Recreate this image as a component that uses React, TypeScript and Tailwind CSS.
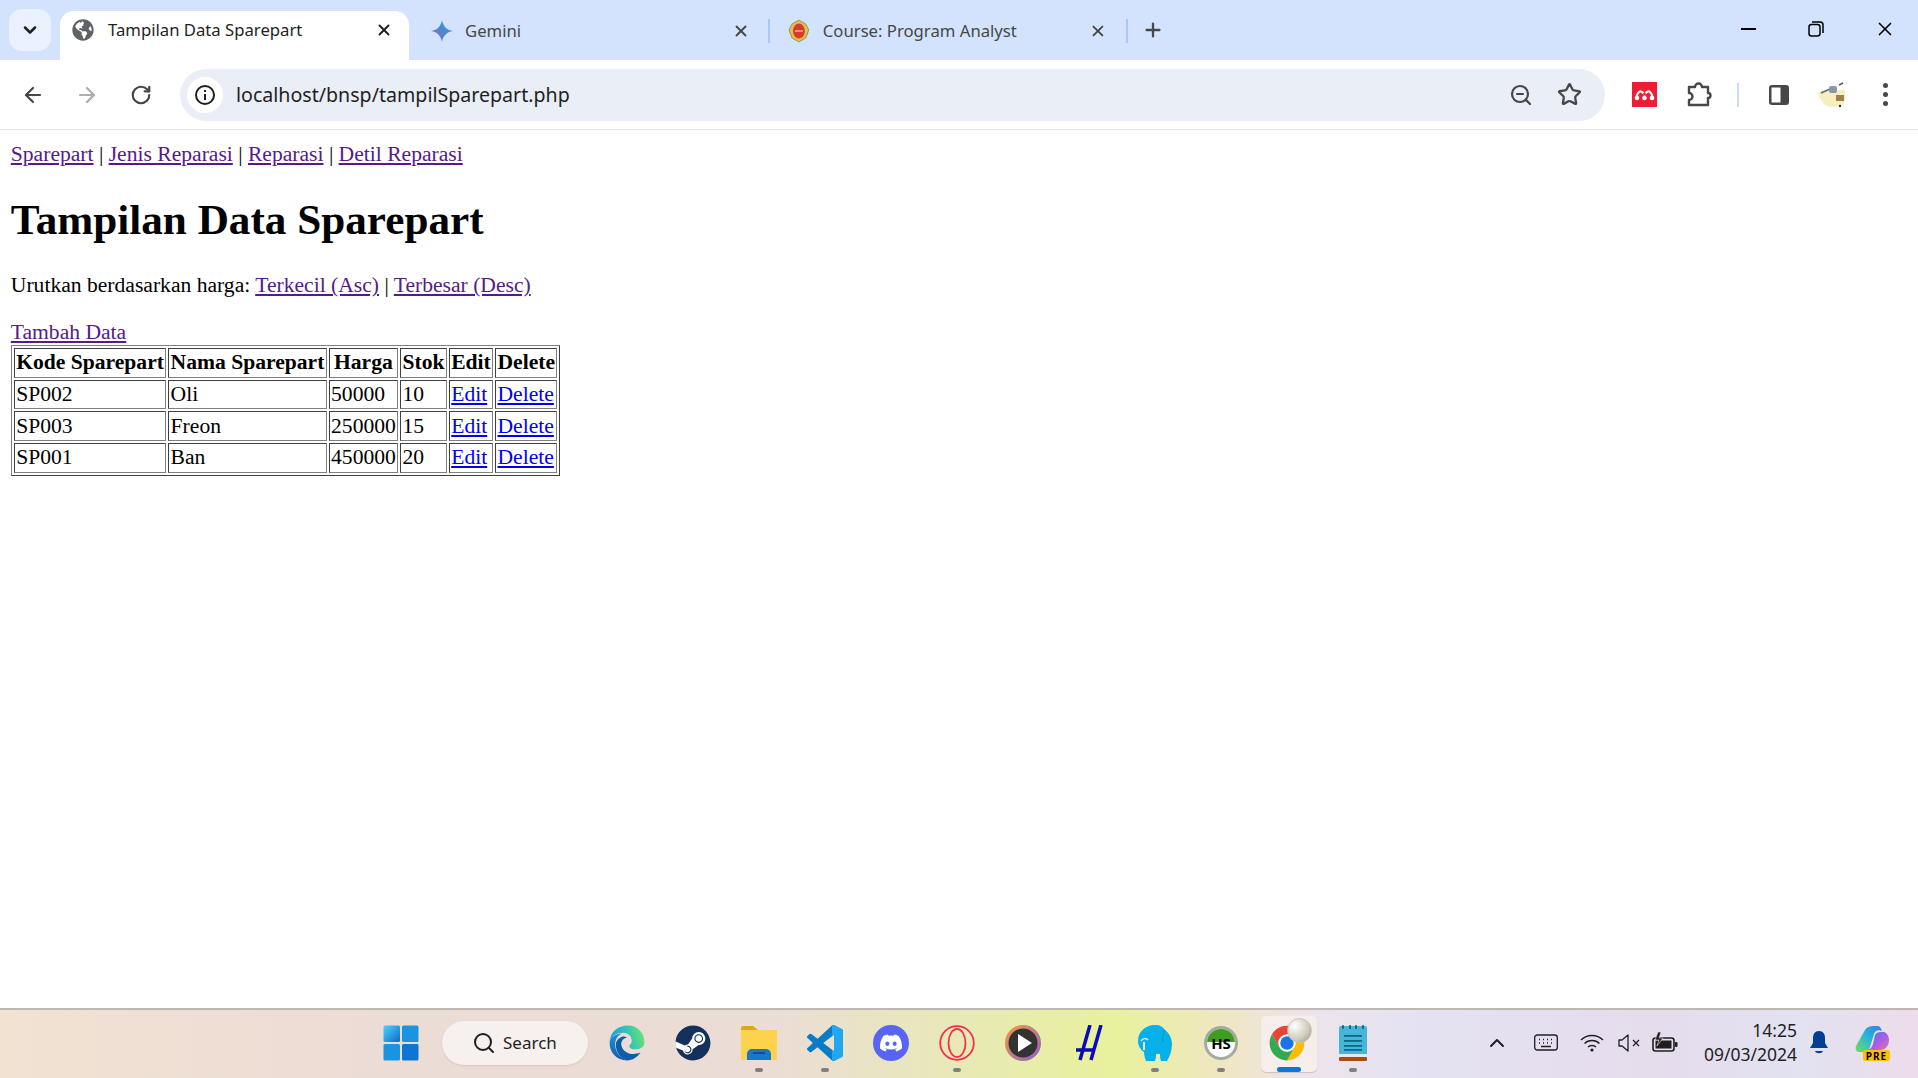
import { ChevronDown, ChevronUp, X, Plus, ArrowLeft, ArrowRight, RotateCw, ZoomOut, Star, Search } from "lucide-react";
import { FaDiscord, FaGlobeAmericas, FaSteam } from "react-icons/fa";
import type { ReactNode } from "react";

const ui = "[font-family:'Noto_Sans',sans-serif]";

function GeminiStar() {
  return (
    <svg width="24" height="24" viewBox="0 0 24 24">
      <defs>
        <linearGradient id="gem" x1="0" y1="1" x2="1" y2="0">
          <stop offset="0" stopColor="#9168c0" />
          <stop offset="0.5" stopColor="#5684d1" />
          <stop offset="1" stopColor="#1ba1e3" />
        </linearGradient>
      </defs>
      <path d="M12 1c1 6 4.500 10 11 11-6.500 1-10 5-11 11-1-6-4.500-10-11-11 6.500-1 10-5 11-11z" fill="url(#gem)" />
    </svg>
  );
}

function CourseIcon() {
  return (
    <svg width="22" height="24" viewBox="0 0 22 24">
      <path d="M11 1l7 4 3 6-3 8-7 4-7-4-3-8 3-6z" fill="#e3c04a" stroke="#8f9a5a" />
      <ellipse cx="11" cy="12" rx="6" ry="7.500" fill="#d93a30" />
      <path d="M7 12h8" stroke="#f5b0a0" strokeWidth="1.500" />
    </svg>
  );
}

function Mendeley() {
  return (
    <svg width="25" height="25" viewBox="0 0 25 25">
      <rect width="25" height="25" fill="#ee1c34" />
      <path d="M4.500 15c2-7 5-7 8-2.500 3-4.500 6-4.500 8 2.500" fill="none" stroke="#fff" strokeWidth="2.200" />
      <circle cx="5" cy="16" r="2.300" fill="#fff" />
      <circle cx="12.500" cy="16" r="2.300" fill="#fff" />
      <circle cx="20" cy="16" r="2.300" fill="#fff" />
      <circle cx="12.500" cy="12" r="1.400" fill="#ee1c34" />
    </svg>
  );
}

function Avatar() {
  return (
    <svg width="32" height="28" viewBox="0 0 32 28">
      <path d="M2 12c6-4 8-2 12-1 6 0 10-3 14-2 3 4 2 12-2 15-6 3-14 3-18-1C5 20 3 16 2 12z" fill="#f6eec0" />
      <path d="M5 12l9-4" stroke="#6c6c60" strokeWidth="1.500" />
      <rect x="13" y="5" width="8" height="7" rx="2" fill="#8b97a8" />
      <path d="M23 4l4-2" stroke="#555" strokeWidth="1.500" />
      <rect x="20" y="14" width="8" height="6" fill="#9a8350" />
      <circle cx="24" cy="25" r="1.200" fill="#333" />
    </svg>
  );
}

function WindowsLogo() {
  return (
    <svg width="36" height="36" viewBox="0 0 36 36">
      <defs>
        <linearGradient id="win" x1="0" y1="0" x2="1" y2="1">
          <stop offset="0" stopColor="#4fd0fb" />
          <stop offset="1" stopColor="#0a6fc9" />
        </linearGradient>
      </defs>
      <rect x="0.500" y="0.500" width="16.500" height="16.500" rx="1.500" fill="url(#win)" />
      <rect x="19" y="0.500" width="16.500" height="16.500" rx="1.500" fill="#1a93e0" />
      <rect x="0.500" y="19" width="16.500" height="16.500" rx="1.500" fill="#1a93e0" />
      <rect x="19" y="19" width="16.500" height="16.500" rx="1.500" fill="#0c76d2" />
    </svg>
  );
}

function Edge() {
  return (
    <svg width="38" height="38" viewBox="0 0 48 48">
      <defs>
        <linearGradient id="edgeTop" x1="0" y1="0.600" x2="1" y2="0.400">
          <stop offset="0" stopColor="#1a9fd8" />
          <stop offset="0.550" stopColor="#2fc6b8" />
          <stop offset="1" stopColor="#6fe36a" />
        </linearGradient>
        <linearGradient id="edgeLow" x1="0" y1="0" x2="0" y2="1">
          <stop offset="0" stopColor="#1f8fd8" />
          <stop offset="1" stopColor="#0f5fae" />
        </linearGradient>
      </defs>
      <path d="M2 24C2 10 13 2 25 2c13 0 21 10 21 21 0 6-5 9-11 9-4 0-8-1-8-4 0-2 3-3 3-7 0-6-5-10-11-10C10 11 2 17 2 24z" fill="url(#edgeTop)" />
      <path d="M2 24c0-7 8-12 16-12-6 2-9 8-9 14 0 8 6 18 15 20C11 46 2 36 2 24z" fill="url(#edgeLow)" />
      <path d="M10 24c3-7 9-10 14-7-5 1-8 5-7 10 1 8 12 14 24 9-4 6-10 10-17 10-9-2-15-12-14-22z" fill="#0e5da8" />
    </svg>
  );
}

function Folder() {
  return (
    <svg width="36" height="34" viewBox="0 0 36 34">
      <path d="M0 2a2 2 0 0 1 2-2h10l5 4h19v6H0z" fill="#e2a70b" />
      <rect y="4" width="36" height="30" rx="1" fill="#fcd34d" />
      <path d="M6 34v-6a5 5 0 0 1 5-5h14a5 5 0 0 1 5 5v6z" fill="#1678c8" />
      <rect x="12" y="26" width="12" height="2" fill="#0a4f90" />
    </svg>
  );
}

function VsCode() {
  const d =
    "M23.15 2.587L18.21.21a1.494 1.494 0 0 0-1.705.29l-9.46 8.63-4.12-3.128a.999.999 0 0 0-1.276.057L.327 7.261A1 1 0 0 0 .326 8.74L3.899 12 .326 15.26a1 1 0 0 0 .001 1.479L1.65 17.94a.999.999 0 0 0 1.276.057l4.12-3.128 9.46 8.63a1.492 1.492 0 0 0 1.704.29l4.942-2.377A1.5 1.5 0 0 0 24 20.06V3.939a1.5 1.5 0 0 0-.85-1.352zm-5.146 14.861L10.826 12l7.178-5.448v10.896z";
  return (
    <svg width="36" height="36" viewBox="0 0 24 24">
      <defs>
        <clipPath id="vsr">
          <rect x="16.600" y="0" width="8" height="24" />
        </clipPath>
      </defs>
      <path d={d} fill="#0a7cc7" />
      <path d={d} fill="#20a7f0" clipPath="url(#vsr)" />
    </svg>
  );
}

function Opera() {
  return (
    <svg width="36" height="36" viewBox="0 0 36 36" fill="none" stroke="#f5304f" strokeWidth="1.800">
      <circle cx="18" cy="18" r="16.800" />
      <ellipse cx="18" cy="18" rx="8.500" ry="14" />
    </svg>
  );
}

function PlayIcon() {
  return (
    <svg width="36" height="36" viewBox="0 0 36 36">
      <defs>
        <linearGradient id="pl" x1="0" y1="0" x2="1" y2="1">
          <stop offset="0" stopColor="#f59a3c" />
          <stop offset="1" stopColor="#8f5fc8" />
        </linearGradient>
      </defs>
      <circle cx="18" cy="18" r="18" fill="url(#pl)" />
      <circle cx="18" cy="18" r="14.500" fill="#333" />
      <path d="M13 9l14 9-14 9z" fill="#fff" />
    </svg>
  );
}

function HashIcon() {
  return (
    <svg width="28" height="36" viewBox="0 0 28 36" fill="none" stroke="#0a0ab8" strokeWidth="3.500">
      <path d="M15 0L5 35" />
      <path d="M26 0L16 35" />
      <path d="M1 25h18" />
    </svg>
  );
}

function Elephant() {
  return (
    <svg width="34" height="36" viewBox="0 0 34 36">
      <path d="M17 0c5 0 8 2 10 5 4 3 7 8 7 14 0 6-2 12-5 17h-6c-1-3-1-5-1-7h-4c0 2 0 4-1 7H8c-1-3-2-6-2-9-3-2-6-6-6-11C0 7 7 0 17 0z" fill="#08b0ea" />
      <path d="M27 5c-2 3-3 7-2 12" stroke="#0790c4" strokeWidth="1" fill="none" />
      <path d="M3 16c2-3 5-3 7-1" stroke="#d8f0f8" strokeWidth="1.500" fill="none" />
      <path d="M6 17v8" stroke="#e8e8e8" strokeWidth="2" />
    </svg>
  );
}

function Notepad() {
  return (
    <svg width="28" height="36" viewBox="0 0 28 36">
      <rect x="0" y="1" width="28" height="30" rx="2" fill="#45b5d8" />
      <rect x="0" y="29" width="28" height="3" fill="#e6e6e6" />
      <rect x="0" y="32" width="28" height="4" rx="1" fill="#b04a0c" />
      {[4, 11, 17, 24].map((x) => (
        <rect key={x} x={x - 1} y="0" width="2" height="4" rx="1" fill="#0b6a88" />
      ))}
      {[10, 15, 20, 24].map((y) => (
        <rect key={y} x={5} y={y} width={18} height="1.800" fill="#0b6a88" />
      ))}
    </svg>
  );
}

function ChromeIcon() {
  return (
    <svg width="38" height="38" viewBox="0 0 48 48">
      <path d="M5 13a22 22 0 0 1 38 0H24L14.500 29.500z" fill="#ea4335" />
      <path d="M43 13a22 22 0 0 1-19 33l9.500-16.500L24 13z" fill="#fbbc04" />
      <path d="M24 46A22 22 0 0 1 5 13l9.500 16.500h19z" fill="#34a853" />
      <circle cx="24" cy="24" r="11" fill="#fff" />
      <circle cx="24" cy="24" r="8.500" fill="#1a73e8" />
    </svg>
  );
}

function CopilotMark() {
  return (
    <svg width="34" height="27" viewBox="0 0 34 27">
      <defs>
        <linearGradient id="copL" x1="0" y1="1" x2="1" y2="0">
          <stop offset="0" stopColor="#7ed957" />
          <stop offset="0.5" stopColor="#28b8d8" />
          <stop offset="1" stopColor="#2f7fe8" />
        </linearGradient>
        <linearGradient id="copR" x1="0" y1="0" x2="1" y2="1">
          <stop offset="0" stopColor="#4f6fe8" />
          <stop offset="0.6" stopColor="#b060e0" />
          <stop offset="1" stopColor="#f070a8" />
        </linearGradient>
      </defs>
      <path d="M10 4c2-3 5-4 8-4h4c3 0 4 2 5 5-4-2-7 0-8 3l-4 13c-1 3-3 5-6 5H4c-3 0-4-3-3-6z" fill="url(#copL)" />
      <path d="M20 9c1-2 3-3 6-3h3c3 1 5 4 5 8 0 5-3 10-9 10H13c3-1 4-3 5-6z" fill="url(#copR)" />
    </svg>
  );
}

function TaskSlot({ children, dot }: { children: ReactNode; dot?: boolean }) {
  return (
    <div className="relative flex h-full w-[66px] shrink-0 items-center justify-center">
      {children}
      {dot && <span className="absolute bottom-[4px] left-[29px] h-[4px] w-[8px] rounded-full bg-[#808080]" />}
    </div>
  );
}

function TabClose({ dark }: { dark?: boolean }) {
  return <X size={18} strokeWidth={2.5} className={dark ? "text-[#1f1f1f]" : "text-[#474747]"} />;
}

function TabStrip() {
  return (
    <div className={`flex h-[60px] items-start bg-[#d3e3fd] ${ui}`}>
      <div className="ml-[9px] mt-[9px] flex h-[42px] w-[42px] items-center justify-center rounded-[13px] bg-[#e9f1fe]">
        <ChevronDown size={20} strokeWidth={3} className="text-[#1f1f1f]" />
      </div>
      <div className="ml-[9px] mt-[11px] flex h-[49px] w-[349px] items-center rounded-t-[14px] bg-white pb-[11px] pl-[12px] text-[16.7px] text-[#1f1f1f]">
        <FaGlobeAmericas size={22} className="text-[#5f6368]" />
        <span className="ml-[14px] w-[267px]">Tampilan Data Sparepart</span>
        <TabClose dark />
      </div>
      <div className="mt-[12px] flex h-[38px] w-[361px] items-center pl-[21px] text-[16.7px] text-[#474747]">
        <GeminiStar />
        <span className="ml-[11px] w-[267px]">Gemini</span>
        <TabClose />
        <span className="ml-[18px] h-[24px] w-[2px] bg-[#a8c7fa]" />
      </div>
      <div className="mt-[12px] flex h-[38px] w-[358px] items-center pl-[18px] text-[16.7px] text-[#474747]">
        <CourseIcon />
        <span className="ml-[13px] w-[269px]">Course: Program Analyst</span>
        <TabClose />
        <span className="ml-[19px] h-[24px] w-[2px] bg-[#a8c7fa]" />
      </div>
      <Plus size={22} strokeWidth={2.5} className="ml-[14px] mt-[19px] text-[#474747]" />
      <div className="ml-auto mr-[22px] mt-[18px] flex items-center">
        <div className="h-[2px] w-[15px] bg-black" />
        <svg width="16" height="16" viewBox="0 0 16 16" fill="none" stroke="#000" strokeWidth="1.500" className="ml-[52px]">
          <rect x="1" y="3.500" width="11" height="11.500" rx="2.500" />
          <path d="M4 1h8a3 3 0 0 1 3 3v8" />
        </svg>
        <X size={22} strokeWidth={1.8} className="ml-[50px] text-black" />
      </div>
    </div>
  );
}

function Toolbar() {
  return (
    <div className={`flex h-[70px] items-center border-b border-[#e1e3e6] bg-white ${ui}`}>
      <ArrowLeft size={24} strokeWidth={2.2} className="ml-[21px] text-[#474747]" />
      <ArrowRight size={24} strokeWidth={2.2} className="ml-[30px] text-[#adadad]" />
      <RotateCw size={22} strokeWidth={2.4} className="ml-[31px] text-[#474747]" />
      <div className="ml-[28px] flex h-[52px] w-[1425px] items-center rounded-full bg-[#e9eef7] pl-[7px] pr-[23px]">
        <div className="flex h-[36px] w-[36px] items-center justify-center rounded-full bg-white">
          <svg width="22" height="22" viewBox="0 0 22 22" fill="none" stroke="#1f1f1f" strokeWidth="2">
            <circle cx="11" cy="11" r="9" />
            <path d="M11 10v6M11 6v2" />
          </svg>
        </div>
        <span className="ml-[13px] text-[19.6px] text-[#1f1f1f]">localhost/bnsp/tampilSparepart.php</span>
        <ZoomOut size={24} strokeWidth={2.2} className="ml-auto text-[#474747]" />
        <Star size={25} strokeWidth={2.2} className="ml-[24px] text-[#474747]" />
      </div>
      <div className="ml-[27px]">
        <Mendeley />
      </div>
      <svg width="26" height="26" viewBox="0 0 26 26" fill="none" stroke="#474747" strokeWidth="2.400" className="ml-[29px]">
        <path d="M3 5h6a3.500 3.500 0 0 1 7 0h6v6a2.500 2.500 0 0 1 0 5v7H3v-5a3.500 3.500 0 0 0 0-7z" strokeLinejoin="round" />
      </svg>
      <span className="ml-[25px] h-[24px] w-[2px] bg-[#c9dcfa]" />
      <svg width="22" height="22" viewBox="0 0 22 22" className="ml-[29px]">
        <rect x="1" y="1" width="20" height="20" rx="3" fill="#474747" />
        <rect x="3.500" y="3.500" width="9" height="15" fill="#fff" />
      </svg>
      <div className="ml-[26px]">
        <Avatar />
      </div>
      <div className="ml-[35px] flex flex-col gap-[4px]">
        <span className="h-[5px] w-[5px] rounded-full bg-[#474747]" />
        <span className="h-[5px] w-[5px] rounded-full bg-[#474747]" />
        <span className="h-[5px] w-[5px] rounded-full bg-[#474747]" />
      </div>
    </div>
  );
}

const rows = [
  ["SP002", "Oli", "50000", "10"],
  ["SP003", "Freon", "250000", "15"],
  ["SP001", "Ban", "450000", "20"],
];

const visited = "text-[#551a8b] underline";
const cell = "border border-[#808080] border-l-[#404040] border-t-[#404040] p-[1.35px]";

function Page() {
  return (
    <div className="flex-1 bg-white px-[10.8px] pt-[11.5px] text-[21.6px] leading-[normal] text-black [font-family:'Liberation_Serif',serif]">
      <div>
        <a className={visited}>Sparepart</a> | <a className={visited}>Jenis Reparasi</a> | <a className={visited}>Reparasi</a> | <a className={visited}>Detil Reparasi</a>
      </div>
      <h1 className="my-[28.9px] text-[43.2px] font-bold leading-[normal]">Tampilan Data Sparepart</h1>
      <p className="mb-[21.6px]">
        Urutkan berdasarkan harga: <a className={visited}>Terkecil (Asc)</a> | <a className={visited}>Terbesar (Desc)</a>
      </p>
      <a className={visited}>Tambah Data</a>
      <table className="border-separate border-spacing-[2.7px] border border-[#404040] border-l-[#808080] border-t-[#808080]">
        <thead>
          <tr>
            {["Kode Sparepart", "Nama Sparepart", "Harga", "Stok", "Edit", "Delete"].map((h) => (
              <th key={h} className={`${cell} font-bold`}>
                {h}
              </th>
            ))}
          </tr>
        </thead>
        <tbody>
          {rows.map((r) => (
            <tr key={r[0]}>
              {r.map((c) => (
                <td key={c} className={cell}>
                  {c}
                </td>
              ))}
              <td className={cell}>
                <a className="text-[#0000ee] underline">Edit</a>
              </td>
              <td className={cell}>
                <a className="text-[#0000ee] underline">Delete</a>
              </td>
            </tr>
          ))}
        </tbody>
      </table>
    </div>
  );
}

function Taskbar() {
  return (
    <div className={`flex h-[70px] items-center border-t-2 border-[#bdb8b4] bg-[linear-gradient(90deg,#f1e2d2_0%,#ecdcd6_20%,#ecdcd6_40%,#e8e6c0_47%,#e8f19c_58%,#efe6c4_64%,#eee4ea_68%,#e4e2f2_74%,#e6dcec_86%,#e2e2f0_94%,#eedcea_100%)] pb-[2px] pl-[368px] ${ui}`}>
      <TaskSlot>
        <WindowsLogo />
      </TaskSlot>
      <div className="ml-[8px] flex h-[44px] w-[146px] shrink-0 items-center rounded-full bg-[#f6f0ee] pl-[30px] text-[#1f1f1f] shadow-[0_1px_2px_rgba(0,0,0,0.1)]">
        <Search size={24} strokeWidth={2} />
        <span className="ml-[7px] text-[17px]">Search</span>
      </div>
      <div className="ml-[6px] flex h-full">
        <TaskSlot>
          <Edge />
        </TaskSlot>
        <TaskSlot>
          <div className="relative flex h-[34px] w-[34px] items-center justify-center rounded-full bg-white">
            <FaSteam size={36} className="absolute text-[#14315c]" />
          </div>
        </TaskSlot>
        <TaskSlot dot>
          <Folder />
        </TaskSlot>
        <TaskSlot dot>
          <VsCode />
        </TaskSlot>
        <TaskSlot>
          <div className="flex h-[36px] w-[36px] items-center justify-center rounded-full bg-[#5865f2]">
            <FaDiscord size={24} className="text-white" />
          </div>
        </TaskSlot>
        <TaskSlot dot>
          <Opera />
        </TaskSlot>
        <TaskSlot>
          <PlayIcon />
        </TaskSlot>
        <TaskSlot>
          <HashIcon />
        </TaskSlot>
        <TaskSlot dot>
          <Elephant />
        </TaskSlot>
        <TaskSlot dot>
          <div className="relative h-[34px] w-[34px] overflow-hidden rounded-full border-[3px] border-[#a5aaa0] bg-white">
            <div className="h-[13px] bg-[#3f9d1f]" />
            <span className="absolute inset-0 flex items-center justify-center text-[15px] font-bold text-black">HS</span>
          </div>
        </TaskSlot>
        <div className="relative flex h-full w-[66px] shrink-0 items-center justify-center">
          <div className="absolute left-[7px] top-[6px] h-[56px] w-[56px] rounded-[5px] bg-[#f6eeea] shadow-[0_1px_1px_rgba(0,0,0,0.15)]" />
          <div className="relative">
            <ChromeIcon />
          </div>
          <div className="absolute left-[33px] top-[8px] h-[25px] w-[25px] rounded-full border border-[#c4c4bc] bg-[radial-gradient(circle_at_30%_30%,#ffffff,#cfcbb8_60%,#8f8c7c)]" />
          <span className="absolute bottom-[4px] left-[23px] h-[5px] w-[24px] rounded-full bg-[#0a78d4]" />
        </div>
        <TaskSlot dot>
          <Notepad />
        </TaskSlot>
      </div>
      <div className="ml-[99px] flex items-center text-[#1f1f1f]">
        <ChevronUp size={24} strokeWidth={2} />
        <svg width="24" height="18" viewBox="0 0 24 18" fill="none" stroke="#1f1f1f" strokeWidth="1.300" className="ml-[25px]">
          <rect x="0.700" y="1" width="22.600" height="15" rx="2.500" />
          <path d="M5 5.500h1M9 5.500h1M13 5.500h1M17 5.500h1M5 9h1M9 9h1M13 9h1M17 9h1M7 12.500h10" strokeWidth="1.600" />
        </svg>
        <svg width="24" height="20" viewBox="0 0 24 20" fill="none" stroke="#1f1f1f" strokeWidth="1.400" className="ml-[22px]">
          <path d="M1 7c6-6 16-6 22 0M4.500 10.500c4-4 11-4 15 0M8 14c2-2 6-2 8 0" />
          <circle cx="12" cy="17" r="1.600" fill="#1f1f1f" stroke="none" />
        </svg>
        <svg width="24" height="20" viewBox="0 0 24 20" fill="none" stroke="#1f1f1f" strokeWidth="1.300" className="ml-[14px]">
          <path d="M1 7v6h3l6 5V2L4 7z" strokeLinejoin="round" />
          <path d="M15 7l6 6M21 7l-6 6" />
        </svg>
        <svg width="26" height="22" viewBox="0 0 26 22" className="ml-[10px]">
          <rect x="1" y="6" width="21" height="13" rx="2.500" fill="none" stroke="#1f1f1f" strokeWidth="1.600" />
          <rect x="3.500" y="8.500" width="16" height="8" fill="#1f1f1f" />
          <rect x="23" y="10" width="2.500" height="5" rx="1" fill="#1f1f1f" />
          <path d="M6 0L3 8h4l-2 6 6-8H7l2-6z" fill="#1f1f1f" stroke="#ecdfee" strokeWidth="0.600" />
        </svg>
      </div>
      <div className="mb-[2px] ml-[19px] flex w-[100px] flex-col items-end text-[17.5px] leading-[24px] text-[#1f1f1f]">
        <span>14:25</span>
        <span>09/03/2024</span>
      </div>
      <svg width="20" height="24" viewBox="0 0 20 24" className="ml-[12px]">
        <path d="M10 0c4 0 6 3 6 7v5l3 5H1l3-5V7c0-4 2-7 6-7z" fill="#003e92" />
        <path d="M6 20h8c-1 3-7 3-8 0z" fill="#003e92" />
      </svg>
      <div className="relative ml-[26px] h-[34px] w-[35px]">
        <CopilotMark />
        <div className="absolute -bottom-[1px] left-[8px] flex h-[11px] w-[27px] items-center justify-center rounded-[3px] bg-[#ffc000] text-[10px] font-bold leading-none tracking-[1px] text-black">
          PRE
        </div>
      </div>
    </div>
  );
}

export default function App() {
  return (
    <div className="flex h-[1078px] w-[1918px] flex-col overflow-hidden bg-white">
      <TabStrip />
      <Toolbar />
      <Page />
      <Taskbar />
    </div>
  );
}
